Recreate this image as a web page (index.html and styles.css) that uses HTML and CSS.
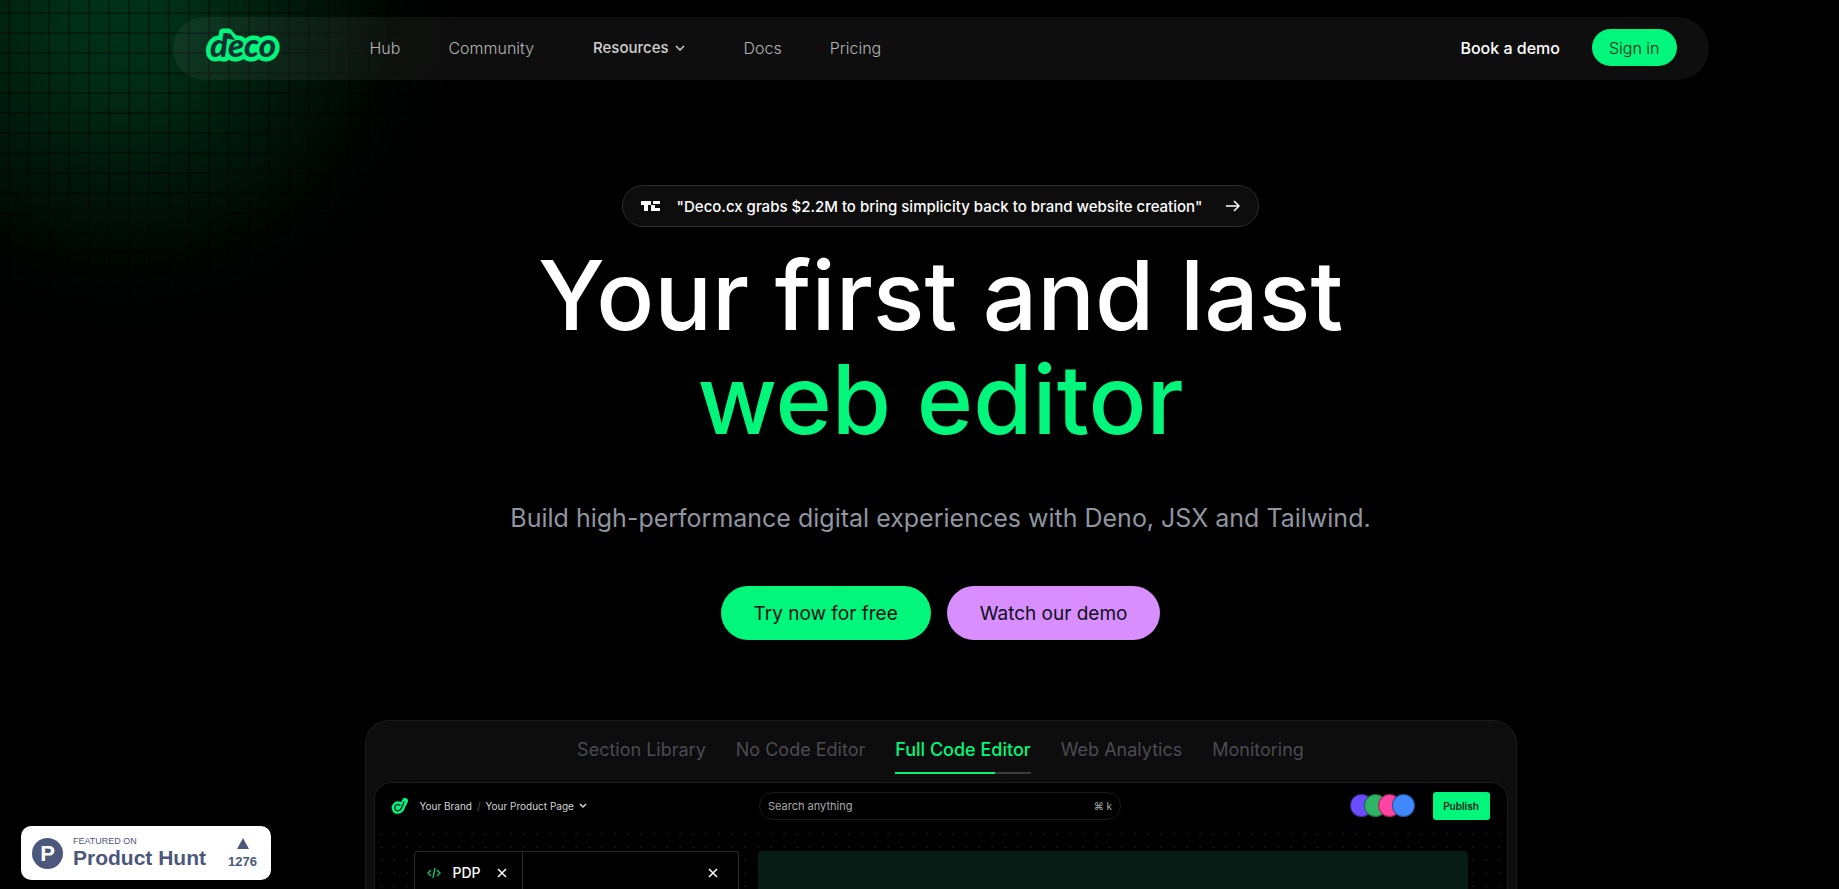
FILE: index.html
```html
<!DOCTYPE html>
<html lang="en">
<head>
    <meta charset="UTF-8">
    <meta name="viewport" content="width=device-width, initial-scale=1.0">
    <title>deco</title>
    <link rel="stylesheet" href="styles.css">
</head>
<body>
    <div class="glow"></div>
    <div class="page">
        <header class="header">
            <a href="#" class="logo" aria-label="deco">
                <svg width="80" height="36" viewBox="0 0 80 36">
                    <path class="logo-edge" d="M20 9 L24 7 L27 10"/>
                    <text class="logo-text" x="5" y="29">deco</text>
                    <path class="logo-arrow" d="M17 10 L25 5 L30 12 Z"/>
                </svg>
            </a>
            <nav class="nav">
                <a href="#">Hub</a>
                <a href="#">Community</a>
                <button class="dropdown">Resources
                    <svg width="10" height="6" viewBox="0 0 10 6"><path d="M1 1 L5 5 L9 1"/></svg>
                </button>
                <a href="#">Docs</a>
                <a href="#">Pricing</a>
            </nav>
            <a href="#" class="book">Book a demo</a>
            <button class="signin">Sign in</button>
        </header>

        <main class="hero">
            <a href="#" class="news">
                <svg width="20" height="10" viewBox="0 0 20 10" fill="#fff"><path d="M0 0h10v4H7v6H3V4H0zM12 0h7v3h-7zM10 4h4v3h5v3h-9z"/></svg>
                <span>"Deco.cx grabs $2.2M to bring simplicity back to brand website creation"</span>
                <svg class="arrow" width="14" height="14" viewBox="0 0 14 14"><path d="M0 7 H13 M8 2 L13 7 L8 12"/></svg>
            </a>
            <h1>Your first and last<br><span>web editor</span></h1>
            <p>Build high-performance digital experiences with Deno, JSX and Tailwind.</p>
            <div class="actions">
                <button class="try">Try now for free</button>
                <button class="watch">Watch our demo</button>
            </div>
        </main>

        <section class="panel">
            <div class="tabs">
                <button>Section Library</button>
                <button>No Code Editor</button>
                <button class="active">Full Code Editor</button>
                <button>Web Analytics</button>
                <button>Monitoring</button>
            </div>
            <div class="editor">
                <div class="topbar">
                    <div class="crumbs">
                        <svg width="18" height="18" viewBox="0 0 18 18">
                            <path class="mark-edge" d="M9 8 C5 6 3 10 4 12 C5 15 10 14 11 10 L14 4"/>
                            <path class="mark" d="M9 8 C5 6 3 10 4 12 C5 15 10 14 11 10 L13 5"/>
                        </svg>
                        <span>Your Brand</span>
                        <span class="slash">/</span>
                        <span>Your Product Page</span>
                        <svg class="chevron" width="8" height="6" viewBox="0 0 8 6"><path d="M1 1 L4 4 L7 1"/></svg>
                    </div>
                    <label class="search">
                        <input type="text" placeholder="Search anything" aria-label="Search anything">
                        <span>⌘ k</span>
                    </label>
                    <div class="right">
                        <div class="avatars"><i class="violet"></i><i class="green"></i><i class="pink"></i><i class="blue"></i></div>
                        <button class="publish">Publish</button>
                    </div>
                </div>
                <div class="canvas">
                    <div class="code">
                        <div class="file">
                            <svg class="tag" width="14" height="12" viewBox="0 0 14 12"><path d="M4 3 L1 6 L4 9 M10 3 L13 6 L10 9 M8 1 L6 11"/></svg>
                            <span>PDP</span>
                            <button class="close" aria-label="Close file"><svg width="10" height="10" viewBox="0 0 10 10"><path d="M1 1 L9 9 M9 1 L1 9"/></svg></button>
                        </div>
                        <button class="close" aria-label="Close editor"><svg width="10" height="10" viewBox="0 0 10 10"><path d="M1 1 L9 9 M9 1 L1 9"/></svg></button>
                    </div>
                    <div class="preview"></div>
                </div>
            </div>
        </section>
    </div>

    <a href="#" class="hunt">
        <span class="hunt-logo">P</span>
        <span class="hunt-name"><small>FEATURED ON</small><strong>Product Hunt</strong></span>
        <span class="votes"><svg width="12" height="11" viewBox="0 0 12 11"><path d="M6 0 L12 11 H0 Z"/></svg>1276</span>
    </a>
</body>
</html>
```

FILE: styles.css
```css
* {
    margin: 0;
    padding: 0;
    box-sizing: border-box;
}

body {
    background-color: #000;
    color: #fff;
    font-family: Inter, 'Liberation Sans', sans-serif;
    font-size: 16px;
}

a {
    color: inherit;
    text-decoration: none;
}

button {
    background: none;
    border: none;
    color: inherit;
    font: inherit;
    cursor: pointer;
}

svg {
    display: block;
    flex-shrink: 0;
}

.glow {
    position: absolute;
    top: 0;
    left: 0;
    width: 480px;
    height: 360px;
    background:
        repeating-linear-gradient(90deg, transparent 0 8px, rgba(0, 0, 0, 0.35) 8px 10px, transparent 10px 20px),
        repeating-linear-gradient(180deg, transparent 0 12px, rgba(0, 0, 0, 0.35) 12px 14px, transparent 14px 20px),
        radial-gradient(ellipse 340px 330px at 125px 10px, #003319 0%, #002c16 22%, #00180c 50%, #000502 78%, #000 100%);
}

.page {
    position: relative;
    display: flex;
    flex-direction: column;
    align-items: center;
    min-height: 100vh;
    padding: 17px 0 0 42px;
}

.header {
    display: flex;
    align-items: center;
    width: 100%;
    max-width: 1536px;
    height: 63px;
    padding: 0 32px 2px;
    border-radius: 32px;
    background-color: rgba(255, 255, 255, 0.055);
}

.logo {
    margin-bottom: 4px;
}

.logo svg {
    overflow: visible;
}

.logo-text {
    font: italic 900 33px Lato, sans-serif;
    fill: #113032;
    stroke: #02f67c;
    stroke-width: 9px;
    stroke-linejoin: round;
    paint-order: stroke;
}

.logo-edge {
    fill: none;
    stroke: #02f67c;
    stroke-width: 10px;
    stroke-linejoin: round;
    stroke-linecap: round;
}

.logo-arrow {
    fill: #113032;
}

.nav {
    display: flex;
    align-items: center;
    gap: 48px;
    margin: 0 auto 0 85px;
    color: #b4b4b4;
    font-weight: 300;
}

.dropdown {
    display: flex;
    align-items: center;
    gap: 6px;
    margin: 0 11px;
    color: #d0d0d0;
    font-size: 15px;
    font-weight: 500;
}

.dropdown path,
.arrow path,
.chevron path,
.close path {
    fill: none;
    stroke: currentColor;
    stroke-width: 1.5;
}

.book {
    margin-right: 32px;
    font-size: 16px;
    font-weight: 500;
}

.signin {
    height: 37px;
    padding: 0 17px;
    border-radius: 20px;
    background-color: #02f67c;
    color: #0a2417;
    font-weight: 300;
}

.hero {
    display: flex;
    flex-direction: column;
    align-items: center;
    padding-top: 105px;
    text-align: center;
}

.news {
    display: flex;
    align-items: center;
    gap: 16px;
    height: 42px;
    padding: 0 18px;
    border: 1px solid #2c2c2c;
    border-radius: 21px;
    background-color: #0d0d0d;
    font-size: 15px;
    font-weight: 500;
}

.arrow {
    margin-left: 8px;
}

h1 {
    margin-top: 16px;
    font-size: 96px;
    font-weight: 500;
    line-height: 104px;
}

h1 span {
    color: #02f67c;
}

.hero p {
    margin-top: 49px;
    color: #9095a0;
    font-size: 25px;
    line-height: 36px;
}

.actions {
    display: flex;
    gap: 16px;
    margin-top: 50px;
}

.actions button {
    height: 54px;
    padding: 0 33px;
    border-radius: 27px;
    color: #0d1117;
    font-size: 19px;
}

.actions .try {
    background-color: #02f67c;
}

.actions .watch {
    background-color: #d98eff;
}

.panel {
    display: flex;
    flex: 1;
    flex-direction: column;
    width: 100%;
    max-width: 1152px;
    margin-top: 80px;
    padding: 0 8px;
    border: 1px solid #1c1c1c;
    border-bottom: none;
    border-radius: 24px 24px 0 0;
    background-color: #0d0d0d;
}

.tabs {
    display: flex;
    justify-content: center;
    gap: 30px;
    height: 61px;
    padding-bottom: 8px;
    color: #4b4b52;
    font-size: 18px;
}

.tabs button {
    padding-top: 6px;
    border-bottom: 2px solid transparent;
}

.tabs .active {
    border-image: linear-gradient(90deg, #02f67c 73%, #3a3a3a 73%) 1;
    color: #02f67c;
    font-weight: 500;
}

.editor {
    display: flex;
    flex: 1;
    flex-direction: column;
    overflow: hidden;
    border: 1px solid #1c1c1c;
    border-bottom: none;
    border-radius: 17px 17px 0 0;
    background-color: #000;
}

.topbar {
    display: grid;
    grid-template-columns: 1fr 362px 1fr;
    align-items: center;
    height: 45px;
    padding: 0 17px 0 16px;
    font-size: 10px;
}

.crumbs {
    display: flex;
    align-items: center;
    gap: 5px;
    color: #d5d5d5;
}

.crumbs span:first-of-type {
    margin-left: 6px;
}

.slash {
    color: #555;
}

.mark-edge,
.mark {
    fill: none;
    stroke: #02f67c;
    stroke-width: 6;
    stroke-linecap: round;
    stroke-linejoin: round;
}

.mark {
    stroke: #113032;
    stroke-width: 1.5;
}

.search {
    display: flex;
    align-items: center;
    height: 28px;
    padding: 0 8px;
    border: 1px solid #1a1a1a;
    border-radius: 14px;
    color: #aaa;
}

.search input {
    flex: 1;
    border: none;
    outline: none;
    background: none;
    color: inherit;
    font: inherit;
    font-size: 11px;
}

.search input::placeholder {
    color: #aaa;
}

.right {
    display: flex;
    align-items: center;
    justify-content: flex-end;
    gap: 18px;
}

.avatars {
    display: flex;
}

.avatars i {
    width: 23px;
    height: 23px;
    margin-left: -9px;
    border: 1px solid rgba(0, 0, 0, 0.4);
    border-radius: 50%;
}

.violet { background-color: #6b4dff; }
.green { background-color: #2fb566; }
.pink { background-color: #ff43a1; }
.blue { background-color: #4088ff; }

.publish {
    width: 57px;
    height: 28px;
    border-radius: 3px;
    background-color: #02f67c;
    color: #0a2417;
    font-weight: 600;
}

.canvas {
    display: grid;
    grid-template-columns: 325px 1fr;
    flex: 1;
    gap: 19px;
    padding: 23px 39px 0;
    background: radial-gradient(circle, #161616 1px, transparent 1px) 0 0 / 13px 13px;
}

.code {
    display: flex;
    align-items: center;
    justify-content: space-between;
    height: 42px;
    padding-right: 20px;
    border: 1px solid #2a2a2a;
    border-bottom: none;
    border-radius: 4px 4px 0 0;
    background-color: #000;
}

.file {
    display: flex;
    align-items: center;
    align-self: stretch;
    width: 108px;
    padding-left: 12px;
    border-right: 1px solid #2a2a2a;
    font-size: 14px;
    font-weight: 500;
}

.file span {
    margin: 0 16px 0 12px;
}

.tag path {
    fill: none;
    stroke: #10b866;
    stroke-width: 1.5;
}

.preview {
    border-radius: 4px 4px 0 0;
    background-color: #071c14;
}

.hunt {
    position: fixed;
    bottom: 9px;
    left: 21px;
    display: flex;
    align-items: center;
    width: 250px;
    height: 54px;
    padding: 0 14px 0 11px;
    border-radius: 10px;
    background-color: #fff;
    color: #4b587c;
    font-family: 'Liberation Sans', sans-serif;
}

.hunt-logo {
    width: 31px;
    height: 31px;
    border-radius: 50%;
    background-color: #4b587c;
    color: #fff;
    font-size: 22px;
    font-weight: bold;
    line-height: 31px;
    text-align: center;
}

.hunt-name {
    display: flex;
    flex-direction: column;
    margin: 0 auto 0 10px;
}

.hunt-name small {
    font-size: 9px;
    line-height: 10px;
}

.hunt-name strong {
    font-size: 21px;
    line-height: 24px;
}

.votes {
    display: flex;
    flex-direction: column;
    align-items: center;
    gap: 5px;
    font-size: 13px;
    font-weight: bold;
    line-height: 15px;
}

.votes path {
    fill: #4b587c;
}
```
